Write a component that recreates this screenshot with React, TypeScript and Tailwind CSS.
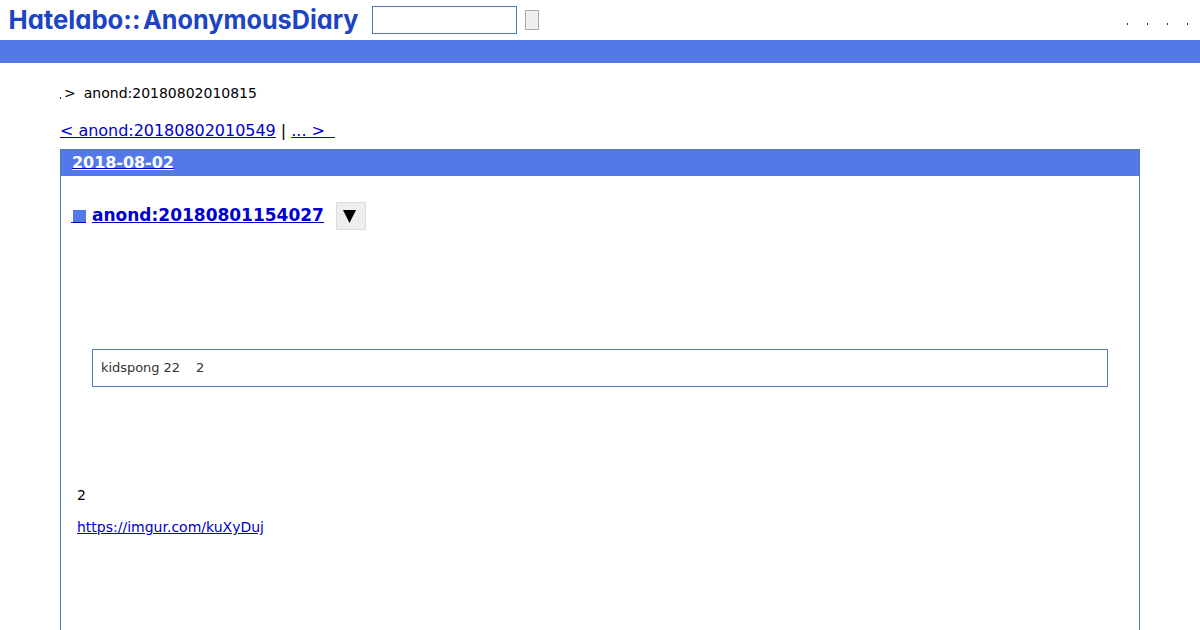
const menuItems = ["help", "list", "search", "login"]

function Header() {
  return (
    <header>
      <div className="flex h-10 items-start">
        <a href="#" className="block h-10 w-[372px] shrink-0">
          <svg
            className="block h-10 w-[372px] fill-[#1c44c4] font-['Inter',sans-serif] text-[26px] font-bold [font-feature-settings:'cv11'_1]"
            viewBox="0 0 372 40"
          >
            <text x="8.5" y="29" textLength="132" lengthAdjust="spacingAndGlyphs">
              Hatelabo::
            </text>
            <text x="143" y="29" textLength="215.5" lengthAdjust="spacingAndGlyphs">
              AnonymousDiary
            </text>
          </svg>
        </a>
        <input type="text" className="mt-1.5 h-7 w-[145px] border border-[#5279ba] bg-white outline-none" />
        <button type="button" className="mt-2.5 ml-2 h-5 w-3.5 border border-[#a9a9a9] bg-[#efefef]" />
        <ul className="mt-[23px] mr-3 ml-auto flex gap-[19px]">
          {menuItems.map((item) => (
            <li key={item} className="h-0.5 w-px bg-[#333333]" />
          ))}
        </ul>
      </div>
      <div className="h-[23px] bg-[#5279e7]" />
    </header>
  )
}

function Day() {
  return (
    <section className="mt-2 h-[481px] border border-b-0 border-[#5279ba]">
      <h2 className="flex h-[26px] bg-[#5279e7] pl-[11px] text-base leading-[25px] font-bold text-white">
        <a href="#" className="h-[19px] border-b border-[#0000cc] tracking-[-0.05px] underline">
          2018-08-02
        </a>
      </h2>

      <div className="mt-[26px] flex h-7 items-start pl-2.5">
        <h3 className="flex text-[17px] leading-[26px] font-bold text-[#0000cc]">
          <a href="#" className="mt-2 mr-1.5 flex h-[13px] w-[15px] justify-end border-b border-[#0000cc]">
            <span className="h-3 w-[13px] bg-[#5279e7]" />
          </a>
          <a href="#" className="underline">
            anond:20180801154027
          </a>
        </h3>
        <button
          type="button"
          className="ml-3 flex h-7 w-[30px] items-center justify-center border border-[#dddddd] bg-[#eeeeee] pr-0.5"
        >
          <svg className="h-[13px] w-[13px] fill-black" viewBox="0 0 13 13">
            <path d="M0 0h13L6.5 13z" />
          </svg>
        </button>
      </div>

      <blockquote className="mt-[119px] ml-[31px] flex h-[38px] w-[1016px] gap-4 border border-[#5279ba] pl-2 text-[13px] leading-[36px] text-[#333333]">
        <span className="tracking-[-0.05px]">kidspong 22</span>
        <span>2</span>
      </blockquote>

      <div className="mt-24 ml-4 text-sm leading-6">
        <p>2</p>
        <p className="mt-2">
          <a href="#" className="text-[#0000cc] underline">
            https://imgur.com/kuXyDuj
          </a>
        </p>
      </div>
    </section>
  )
}

export default function App() {
  return (
    <div className="h-[630px] overflow-hidden bg-white font-['DejaVu_Sans',sans-serif] text-black">
      <Header />
      <main className="mx-[60px]">
        <nav className="mt-5 flex h-5 text-sm leading-5">
          <span className="mt-[14px] mr-[3px] h-0.5 w-px bg-[#333333]" />
          <span>&gt;</span>
          <span className="ml-2">anond:20180802010815</span>
        </nav>
        <div className="mt-[18px] h-5 text-base leading-5 tracking-[-0.03px] whitespace-pre">
          <a href="#" className="text-[#0000cc] underline">
            {"< anond:20180802010549"}
          </a>
          {" | "}
          <a href="#" className="text-[#0000cc] underline">
            {"... >\u00a0\u00a0"}
          </a>
        </div>
        <Day />
      </main>
    </div>
  )
}
